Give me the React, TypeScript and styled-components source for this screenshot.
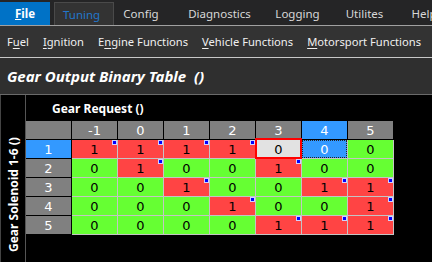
import React from "react";
import styled, { createGlobalStyle } from "styled-components";

const Global = createGlobalStyle`
  html, body { margin: 0; padding: 0; background: #000; }
  body { width: 432px; height: 262px; overflow: hidden; font-family: "Noto Sans", "Open Sans", sans-serif; }
  #root { width: 432px; height: 262px; }
`;

const Page = styled.div`
  width: 432px;
  height: 262px;
  display: flex;
  flex-direction: column;
  background: #000;
  overflow: hidden;
`;

const TopBar = styled.div`
  height: 25px;
  background: #252526;
  display: flex;
  align-items: flex-end;
  border-bottom: 1px solid #a0a0a0;
  flex-shrink: 0;
  overflow: hidden;
`;

const Tab = styled.div<{ $w: number; $kind?: "file" | "active" }>`
  width: ${(p) => p.$w}px;
  flex-shrink: 0;
  height: ${(p) => (p.$kind ? 23 : 25)}px;
  box-sizing: border-box;
  display: flex;
  align-items: center;
  justify-content: ${(p) => (p.$kind === "active" ? "flex-start" : "center")};
  padding-left: ${(p) => (p.$kind === "active" ? 8 : 0)}px;
  font-size: 11.5px;
  white-space: nowrap;
  color: ${(p) => (p.$kind === "active" ? "#2277cc" : p.$kind === "file" ? "#fff" : "#d8d8d8")};
  font-weight: ${(p) => (p.$kind === "file" ? 700 : 400)};
  background: ${(p) => (p.$kind === "file" ? "#0072c6" : p.$kind === "active" ? "#333333" : "transparent")};
  border: ${(p) => (p.$kind === "active" ? "1px solid #4a4a4a" : "none")};
  border-bottom: none;
  margin-right: ${(p) => (p.$kind === "file" ? 4 : 0)}px;
  padding-top: ${(p) => (p.$kind ? 0 : 2)}px;
`;

const SubBar = styled.div`
  height: 31px;
  background: #333333;
  display: flex;
  align-items: center;
  gap: 14px;
  padding-left: 7px;
  border-bottom: 1px solid #c8c8c8;
  flex-shrink: 0;
`;

const SubItem = styled.span`
  font-size: 11.2px;
  color: #f0f0f0;
  white-space: nowrap;
  u { text-underline-offset: 2px; }
`;

const TitleBar = styled.div`
  height: 36px;
  background: #2f2f2f;
  border-bottom: 1px solid #6a6a6a;
  display: flex;
  align-items: center;
  padding-left: 7px;
  flex-shrink: 0;
`;

const Title = styled.h1`
  margin: 0;
  font-size: 15px;
  font-weight: 700;
  font-style: italic;
  color: #fff;
  white-space: pre;
`;

const Body = styled.div`
  flex: 1;
  display: flex;
  background: #000;
`;

const SideStrip = styled.div`
  width: 24px;
  border-left: 1px solid #444;
  border-right: 1px solid #555;
  display: flex;
  align-items: flex-start;
  justify-content: center;
  padding-top: 9px;
`;

const SideLabel = styled.div`
  writing-mode: vertical-rl;
  transform: rotate(180deg);
  color: #fff;
  font-size: 12px;
  font-weight: 700;
  white-space: nowrap;
  height: 148px;
  text-align: left;
`;

const Main = styled.div`
  display: flex;
  flex-direction: column;
`;

const AxisLabel = styled.div`
  height: 26px;
  display: flex;
  align-items: center;
  padding-left: 26px;
  color: #fff;
  font-size: 12px;
  font-weight: 700;
`;

const Grid = styled.div`
  display: grid;
  grid-template-columns: repeat(8, 46px);
  grid-auto-rows: 19px;
`;

const HeadCell = styled.div<{ $sel?: boolean }>`
  box-sizing: border-box;
  background: ${(p) => (p.$sel ? "#3399ff" : "#808080")};
  color: #fff;
  font-family: "DejaVu Sans", sans-serif;
  font-size: 13px;
  display: flex;
  align-items: center;
  justify-content: center;
  border-right: 1px solid #000;
  border-bottom: 1px solid #000;
`;

type CellKind = "on" | "off" | "edit" | "focus";

const cellBg: Record<CellKind, string> = {
  on: "#ff4444",
  off: "#66ff33",
  edit: "#e2e2e2",
  focus: "#3399ff",
};

const DataCell = styled.div<{ $kind: CellKind }>`
  position: relative;
  box-sizing: border-box;
  background: ${(p) => cellBg[p.$kind]};
  color: ${(p) => (p.$kind === "focus" ? "#fff" : "#000")};
  font-family: "DejaVu Sans", sans-serif;
  font-size: 13px;
  display: flex;
  align-items: center;
  justify-content: center;
  border-right: 1px solid #c4c4c4;
  border-bottom: 1px solid #c4c4c4;
`;

const EditFrame = styled.div`
  position: absolute;
  left: -1px;
  top: -2px;
  right: -1px;
  bottom: -1px;
  border: 2px solid #ff0000;
  pointer-events: none;
`;

const FocusFrame = styled.div`
  position: absolute;
  inset: 0 0 0 0;
  border: 1px dotted #222;
  pointer-events: none;
`;

const Marker = styled.div`
  position: absolute;
  top: 0;
  right: 0;
  width: 3px;
  height: 3px;
  background: #0000ff;
  border: 1px solid #d0d0ff;
`;

const cols = [-1, 0, 1, 2, 3, 4, 5];
const data = [
  [1, 1, 1, 1, 0, 0, 0],
  [0, 1, 0, 0, 1, 0, 0],
  [0, 0, 1, 0, 0, 1, 1],
  [0, 0, 0, 1, 0, 0, 1],
  [0, 0, 0, 0, 1, 1, 1],
];

const tabs: { label: React.ReactNode; w: number; kind?: "file" | "active" }[] = [
  { label: <><u>F</u>ile</>, w: 50, kind: "file" },
  { label: "Tuning", w: 60, kind: "active" },
  { label: "Config", w: 54 },
  { label: "Diagnostics", w: 103 },
  { label: "Logging", w: 53 },
  { label: "Utilites", w: 81 },
  { label: "Help", w: 38 },
];

export default function App() {
  return (
    <Page>
      <Global />
      <TopBar>
        {tabs.map((t, i) => (
          <Tab key={i} $w={t.w} $kind={t.kind}>
            {t.label}
          </Tab>
        ))}
      </TopBar>
      <SubBar>
        <SubItem>F<u>u</u>el</SubItem>
        <SubItem><u>I</u>gnition</SubItem>
        <SubItem>E<u>n</u>gine Functions</SubItem>
        <SubItem><u>V</u>ehicle Functions</SubItem>
        <SubItem><u>M</u>otorsport Functions</SubItem>
      </SubBar>
      <TitleBar>
        <Title>{"Gear Output Binary Table  ()"}</Title>
      </TitleBar>
      <Body>
        <SideStrip>
          <SideLabel>Gear Solenoid 1-6 ()</SideLabel>
        </SideStrip>
        <Main>
          <AxisLabel>Gear Request ()</AxisLabel>
          <Grid>
            <HeadCell />
            {cols.map((c, i) => (
              <HeadCell key={c} $sel={i === 5}>{c}</HeadCell>
            ))}
            {data.map((row, r) => (
              <React.Fragment key={r}>
                <HeadCell $sel={r === 0}>{r + 1}</HeadCell>
                {row.map((v, c) => {
                  let kind: CellKind = v ? "on" : "off";
                  if (r === 0 && c === 4) kind = "edit";
                  if (r === 0 && c === 5) kind = "focus";
                  return (
                    <DataCell key={c} $kind={kind}>
                      {v}
                      {v === 1 && <Marker />}
                      {kind === "edit" && <EditFrame />}
                      {kind === "focus" && <FocusFrame />}
                    </DataCell>
                  );
                })}
              </React.Fragment>
            ))}
          </Grid>
        </Main>
      </Body>
    </Page>
  );
}
